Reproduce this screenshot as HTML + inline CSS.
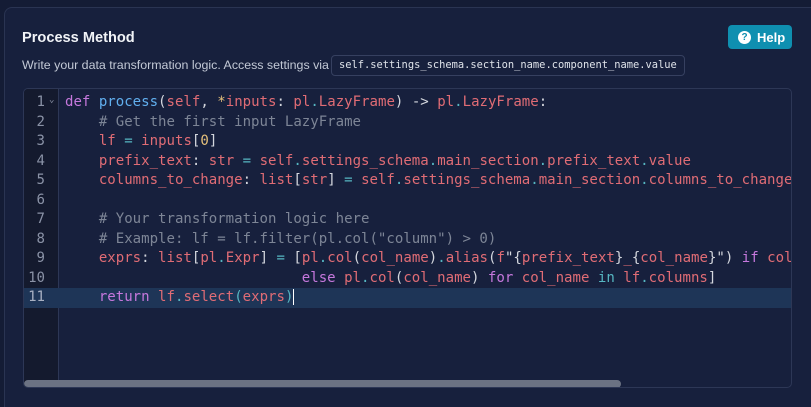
<!DOCTYPE html>
<html><head><meta charset="utf-8"><style>
*{box-sizing:border-box;margin:0;padding:0}
html,body{width:811px;height:407px;overflow:hidden}
body{background:#141c35;font-family:"Liberation Sans",sans-serif;position:relative}
.card{position:absolute;left:4px;top:7px;width:807px;height:400px;background:#17203d;border:1px solid #2a3452;border-right:none;border-bottom:none;border-radius:8px 0 0 0}
.title{position:absolute;left:22px;top:30px;color:#f1f3f7;font-size:14.6px;font-weight:bold}
.help{position:absolute;left:728px;top:25px;width:64px;height:24px;background:#0f8fb0;border-radius:4px;color:#fff;font-size:13px;font-weight:bold;display:flex;align-items:center;padding-left:10px}
.help i{display:inline-block;width:13px;height:13px;border-radius:50%;background:#fff;color:#0f8fb0;font-style:normal;font-size:10px;line-height:13px;text-align:center;margin-right:6px}
.sub{position:absolute;left:22px;top:58px;color:#c3c9d6;font-size:12.4px}
.chip{position:absolute;left:331px;top:55px;width:354px;height:21px;border:1px solid #364060;border-radius:4px;color:#dfe3ea;font-family:"DejaVu Sans Mono",monospace;font-size:10.4px;line-height:19px;padding-left:7px;white-space:nowrap}
.ed{position:absolute;left:23px;top:88px;width:769px;height:300px;border:1px solid #2d3756;border-radius:5px;background:#17203d;overflow:hidden}
.gut{position:absolute;left:0;top:0;width:35px;height:300px;background:#141a2e;border-right:1px solid #2d3756}
.code{position:absolute;left:0;top:4px;width:769px;font-family:"DejaVu Sans Mono",monospace;font-size:14.05px;line-height:19.5px;color:#d4d7de}
.ln{display:block;height:19.5px;position:relative}
.ln .n{position:absolute;left:0;width:21px;text-align:right;color:#8a92a6}
.ln .t{position:absolute;left:41px;white-space:pre}
.fold{position:absolute;left:25px;top:-2px;color:#8a92a6;font-size:9px}
.hl{background:#1e3557}
.hl .n{color:#a8b0c2}
.r{color:#e06c75}.b{color:#61afef}.p{color:#c678dd}.c{color:#7d8596}.o{color:#56b6c2}.y{color:#e5c07b}
.sb{position:absolute;left:0;top:291px;width:597px;height:8px;background:#6b7283;border-radius:4px}
</style></head><body>
<div class="card"></div>
<div class="title">Process Method</div>
<div class="help"><i>?</i>Help</div>
<div class="sub">Write your data transformation logic. Access settings via</div>
<div class="chip">self.settings_schema.section_name.component_name.value</div>
<div class="ed"><div class="gut"></div>
<div class="code"><span class="ln"><span class="n">1</span><span class="fold">⌄</span><span class="t"><span class="p">def</span> <span class="b">process</span>(<span class="r">self</span>, <span class="y">*</span><span class="r">inputs</span>: <span class="r">pl</span><span class="o">.</span><span class="r">LazyFrame</span>) -&gt; <span class="r">pl</span><span class="o">.</span><span class="r">LazyFrame</span>:</span></span><span class="ln"><span class="n">2</span><span class="t">    <span class="c"># Get the first input LazyFrame</span></span></span><span class="ln"><span class="n">3</span><span class="t">    <span class="r">lf</span> <span class="o">=</span> <span class="r">inputs</span>[<span class="y">0</span>]</span></span><span class="ln"><span class="n">4</span><span class="t">    <span class="r">prefix_text</span>: <span class="r">str</span> <span class="o">=</span> <span class="r">self</span><span class="o">.</span><span class="r">settings_schema</span><span class="o">.</span><span class="r">main_section</span><span class="o">.</span><span class="r">prefix_text</span><span class="o">.</span><span class="r">value</span></span></span><span class="ln"><span class="n">5</span><span class="t">    <span class="r">columns_to_change</span>: <span class="r">list</span>[<span class="r">str</span>] <span class="o">=</span> <span class="r">self</span><span class="o">.</span><span class="r">settings_schema</span><span class="o">.</span><span class="r">main_section</span><span class="o">.</span><span class="r">columns_to_change</span></span></span><span class="ln"><span class="n">6</span><span class="t"></span></span><span class="ln"><span class="n">7</span><span class="t">    <span class="c"># Your transformation logic here</span></span></span><span class="ln"><span class="n">8</span><span class="t">    <span class="c"># Example: lf = lf.filter(pl.col("column") &gt; 0)</span></span></span><span class="ln"><span class="n">9</span><span class="t">    <span class="r">exprs</span>: <span class="r">list</span>[<span class="r">pl</span><span class="o">.</span><span class="r">Expr</span>] <span class="o">=</span> [<span class="r">pl</span><span class="o">.</span><span class="r">col</span>(<span class="r">col_name</span>)<span class="o">.</span><span class="r">alias</span>(<span class="r">f</span>"{<span class="r">prefix_text</span>}<span class="r">_</span>{<span class="r">col_name</span>}") <span class="p">if</span> <span class="r">col_name</span></span></span><span class="ln"><span class="n">10</span><span class="t">                            <span class="p">else</span> <span class="r">pl</span><span class="o">.</span><span class="r">col</span>(<span class="r">col_name</span>) <span class="p">for</span> <span class="r">col_name</span> <span class="o">in</span> <span class="r">lf</span><span class="o">.</span><span class="r">columns</span>]</span></span><span class="ln hl"><span class="n">11</span><span class="t">    <span class="p">return</span> <span class="r">lf</span><span class="o">.</span><span class="r">select</span><span class="o">(</span><span class="r">exprs</span><span class="o">)</span><span style="border-left:1px solid #fff"></span></span></span></div>
<div class="sb"></div>
</div>
</body></html>
